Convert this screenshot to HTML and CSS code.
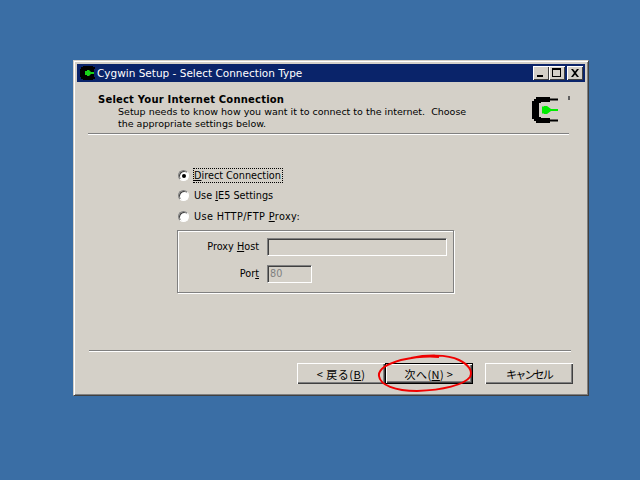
FILE: index.html
```html
<!DOCTYPE html>
<html lang="en">
<head>
<meta charset="utf-8">
<title>Cygwin Setup</title>
<link rel="stylesheet" href="styles.css">
</head>
<body>
<div class="window">
  <div class="titlebar">
    <svg class="app-icon" width="15" height="14" viewBox="0 0 15 14"><path d="M3 0H13V1H15V3H14V11H15V13H13V14H3V13H1V11H0V3H1V1H3Z" fill="#000"/><path d="M5 5H7V4H9L11 6H14V8H11L9 10H7V9H5Z" fill="#18d018"/></svg>
    <span class="title">Cygwin Setup - Select Connection Type</span>
    <div class="controls">
      <span class="ctl"><svg width="12" height="10" viewBox="0 0 12 10"><rect x="2" y="7" width="6" height="2"/></svg></span>
      <span class="ctl"><svg width="12" height="10" viewBox="0 0 12 10"><path d="M1 0H10V9H1ZM2 2V8H9V2Z" fill-rule="evenodd"/></svg></span>
      <span class="ctl ctl-close"><svg width="12" height="10" viewBox="0 0 12 10"><path d="M2 1H4L6 3.500L8 1H10L7 5L10 9H8L6 6.500L4 9H2L5 5Z"/></svg></span>
    </div>
  </div>
  <div class="header">
    <div class="header-text">
      <div class="heading">Select Your Internet Connection</div>
      <div class="desc">Setup needs to know how you want it to connect to the internet.&nbsp; Choose<br>the appropriate settings below.</div>
    </div>
    <svg class="logo" width="26" height="26" viewBox="0 0 26 26"><path d="M4 0H18V1.500H26V3.500H18V5H9V6H7V20H9V21H18V22.500H26V24.500H18V26H4V24H2V22H0V4H2V2H4Z" fill="#000"/><path d="M10 9.500H12V9H15L19 12H26V14H19L15 17H12V16.500H10Z" fill="#00ec00"/></svg>
    <span class="tick"></span>
  </div>
  <div class="rule"></div>
  <div class="options">
    <label class="radio-row"><span class="radio radio-on"></span><span class="focus"><u>D</u>irect Connection</span></label>
    <label class="radio-row"><span class="radio"></span><span>Use <u>I</u>E5 Settings</span></label>
    <label class="radio-row"><span class="radio"></span><span class="wide">Use HTTP/FTP <u>P</u>roxy:</span></label>
    <div class="proxy">
      <div class="field"><span class="field-label">Proxy <u>H</u>ost</span><span class="input input-host"></span></div>
      <div class="field"><span class="field-label">Por<u>t</u></span><span class="input input-port">80</span></div>
    </div>
  </div>
  <div class="rule rule-footer"></div>
  <div class="buttons">
    <span class="btn btn-back">&lt; 戻る(<u>B</u>)</span>
    <span class="btn btn-default">次へ(<u>N</u>) &gt;</span>
    <span class="btn btn-cancel">キャンセル</span>
    <svg class="circle" width="96" height="38" viewBox="0 0 96 38"><path d="M34 4C48 1 70 0 82 6C92 11 96 17 93 23C87 31 66 36 40 37C18 37 3 31 2 22C1 15 10 10 24 6C38 3 52 2 62 3" fill="none" stroke="#f00000" stroke-width="2"/></svg>
  </div>
</div>
</body>
</html>
```
FILE: styles.css
```css
html, body {
  margin: 0;
  height: 100%;
  background: #3a6ea5;
  overflow: hidden;
}
.window {
  position: absolute;
  left: 73px;
  top: 60px;
  width: 516px;
  height: 336px;
  box-sizing: border-box;
  padding: 4px 3px 3px 4px;
  background: #d4d0c8;
  border-top: 1px solid #d4d0c8;
  border-left: 1px solid #d4d0c8;
  border-right: 1px solid #404040;
  border-bottom: 1px solid #404040;
  box-shadow: inset 1px 1px 0 #fff, inset -1px -1px 0 #808080;
  font-family: "DejaVu Sans", sans-serif;
  font-size: 9.700px;
  color: #000;
}
.titlebar {
  display: flex;
  align-items: center;
  height: 18px;
  margin: -1px 0 0 -1px;
  padding: 0 2px 0 3px;
  background: #0a246a;
  color: #fff;
}
.app-icon { flex: none; margin-right: 2px; }
.title {
  font-size: 10.500px;
  white-space: nowrap;
}
.controls { display: flex; margin-left: auto; }
.ctl {
  width: 16px;
  height: 14px;
  box-sizing: border-box;
  display: flex;
  align-items: center;
  justify-content: center;
  background: #d4d0c8;
  box-shadow: inset 1px 1px 0 #fff, inset -1px -1px 0 #404040;
}
.ctl-close { margin-left: 2px; }
.header {
  position: relative;
  height: 51px;
  display: flex;
  justify-content: space-between;
}
.header-text { padding: 12px 0 0 20px; }
.heading {
  font-weight: bold;
  font-size: 10px;
  line-height: 12px;
  letter-spacing: 0.200px;
}
.desc {
  font-size: 9.500px;
  line-height: 11.500px;
  padding-left: 20px;
  white-space: nowrap;
}
.logo { margin: 15px 27px 0 0; }
.tick {
  position: absolute;
  right: 15px;
  top: 14px;
  width: 2px;
  height: 4px;
  background: #606060;
}
.rule {
  height: 1px;
  margin: 0 16px 0 10px;
  background: #808080;
  border-bottom: 1px solid #fff;
}
.options {
  padding: 33px 0 0 100px;
  height: 215px;
  box-sizing: border-box;
}
.radio-row {
  display: flex;
  align-items: center;
  gap: 5px;
  height: 14px;
  margin-bottom: 6.500px;
}
.radio {
  flex: none;
  width: 11px;
  height: 11px;
  border-radius: 50%;
  background: #fff;
  border: 1px solid;
  border-color: #808080 #fff #fff #808080;
  box-shadow: inset 1px 1px 0 #404040;
  box-sizing: border-box;
  position: relative;
}
.radio-on::after {
  content: "";
  position: absolute;
  left: 3px;
  top: 3px;
  width: 4px;
  height: 4px;
  border-radius: 50%;
  background: #000;
}
.focus {
  outline: 1px dotted #000;
  padding: 0 1px 0 0;
  line-height: 13px;
}
.wide { letter-spacing: 0.400px; }
.proxy {
  width: 277px;
  height: 63px;
  box-sizing: border-box;
  margin: 6px 0 0 -1px;
  border: 1px solid #808080;
  box-shadow: 1px 1px 0 #fff, inset 1px 1px 0 #fff;
  padding-top: 7px;
}
.field {
  display: flex;
  align-items: center;
  height: 18px;
  margin-bottom: 9px;
}
.field-label {
  width: 81px;
  text-align: right;
  margin-right: 8px;
}
.input {
  box-sizing: border-box;
  height: 18px;
  border: 1px solid;
  border-color: #808080 #fff #fff #808080;
  box-shadow: inset 1px 1px 0 #404040;
  padding: 1px 0 0 2px;
  color: #808080;
  line-height: 14px;
}
.input-host { width: 180px; }
.input-port { width: 45px; }
.rule-footer { margin: 0 14px 0 11px; }
.buttons {
  position: relative;
  display: flex;
  justify-content: flex-end;
  padding: 11px 12px 0 0;
  font-family: "Noto Sans CJK JP", "DejaVu Sans", sans-serif;
}
.btn {
  box-sizing: border-box;
  width: 88px;
  height: 21px;
  display: flex;
  align-items: center;
  justify-content: center;
  white-space: pre;
  background: #d4d0c8;
  font-size: 11px;
  box-shadow: inset 1px 1px 0 #fff, inset -1px -1px 0 #404040, inset -2px -2px 0 #808080;
}
.btn-back { letter-spacing: 0.500px; }
.btn-default {
  border: 1px solid #000;
  letter-spacing: 0.400px;
}
.btn-cancel {
  margin-left: 12px;
  letter-spacing: -1.800px;
}
.circle {
  position: absolute;
  right: 112px;
  top: 2px;
}
```
